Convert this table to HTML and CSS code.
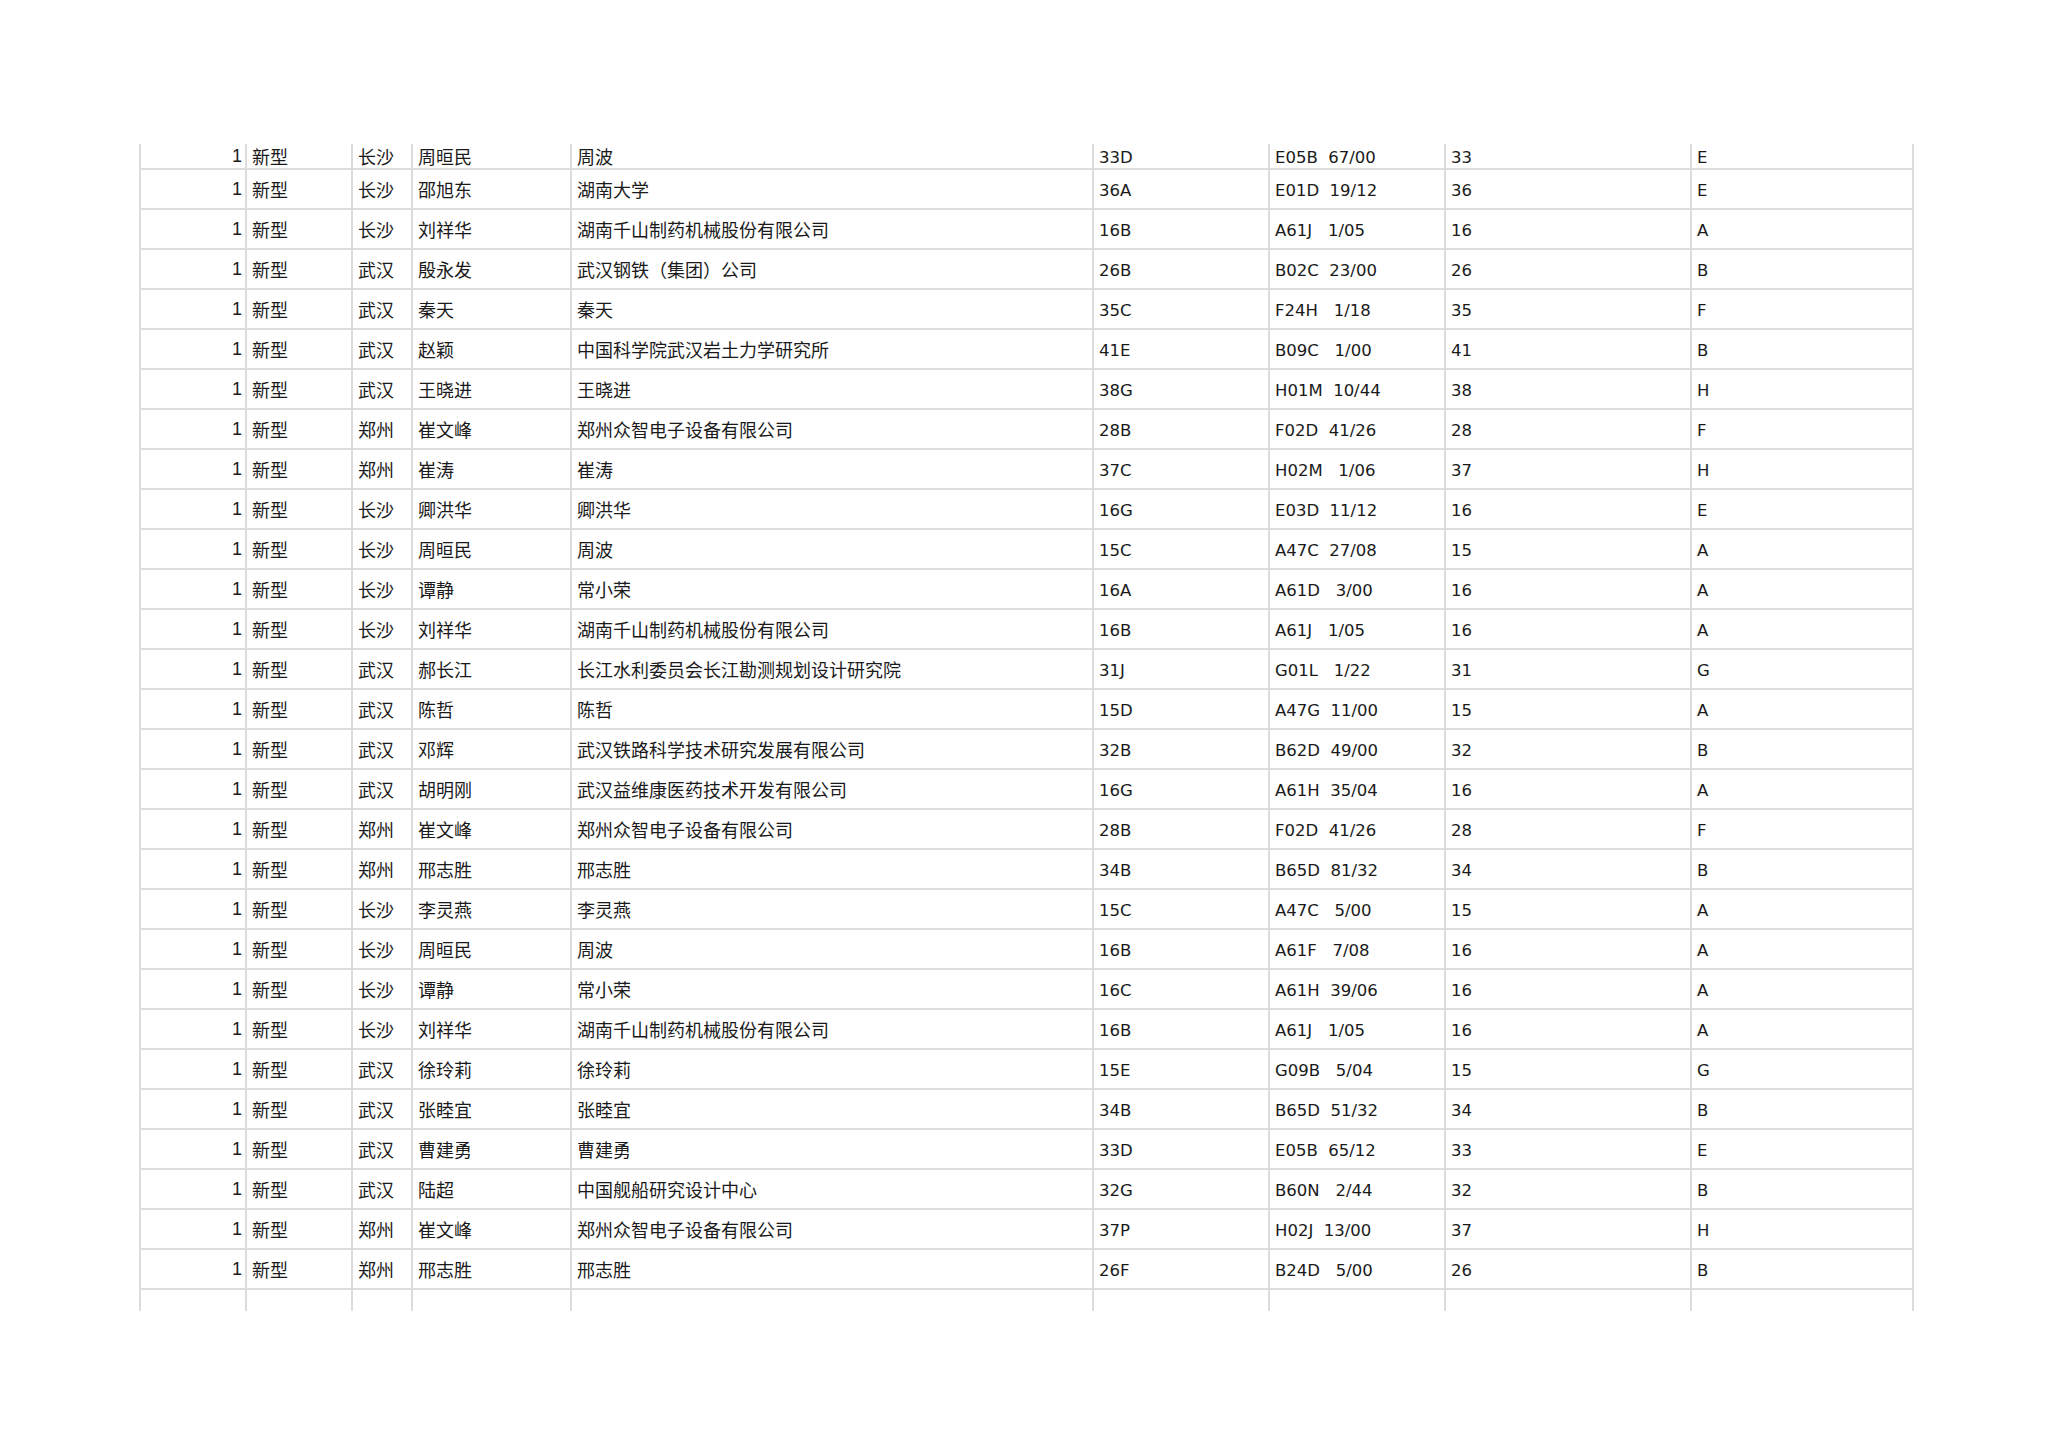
FILE: index.html
```html
<!DOCTYPE html>
<html lang="zh-CN">
<head>
<meta charset="utf-8">
<title>专利列表</title>
<link rel="stylesheet" href="styles.css">
</head>
<body>
<div class="page">
  <div class="sheet">
    <div class="row first"><div class="c num">1</div><div class="c cn">新型</div><div class="c cn">长沙</div><div class="c cn">周晅民</div><div class="c cn">周波</div><div class="c lt">33D</div><div class="c lt ipc">E05B  67/00</div><div class="c lt">33</div><div class="c lt">E</div></div>
    <div class="row"><div class="c num">1</div><div class="c cn">新型</div><div class="c cn">长沙</div><div class="c cn">邵旭东</div><div class="c cn">湖南大学</div><div class="c lt">36A</div><div class="c lt ipc">E01D  19/12</div><div class="c lt">36</div><div class="c lt">E</div></div>
    <div class="row"><div class="c num">1</div><div class="c cn">新型</div><div class="c cn">长沙</div><div class="c cn">刘祥华</div><div class="c cn">湖南千山制药机械股份有限公司</div><div class="c lt">16B</div><div class="c lt ipc">A61J   1/05</div><div class="c lt">16</div><div class="c lt">A</div></div>
    <div class="row"><div class="c num">1</div><div class="c cn">新型</div><div class="c cn">武汉</div><div class="c cn">殷永发</div><div class="c cn">武汉钢铁（集团）公司</div><div class="c lt">26B</div><div class="c lt ipc">B02C  23/00</div><div class="c lt">26</div><div class="c lt">B</div></div>
    <div class="row"><div class="c num">1</div><div class="c cn">新型</div><div class="c cn">武汉</div><div class="c cn">秦天</div><div class="c cn">秦天</div><div class="c lt">35C</div><div class="c lt ipc">F24H   1/18</div><div class="c lt">35</div><div class="c lt">F</div></div>
    <div class="row"><div class="c num">1</div><div class="c cn">新型</div><div class="c cn">武汉</div><div class="c cn">赵颖</div><div class="c cn">中国科学院武汉岩土力学研究所</div><div class="c lt">41E</div><div class="c lt ipc">B09C   1/00</div><div class="c lt">41</div><div class="c lt">B</div></div>
    <div class="row"><div class="c num">1</div><div class="c cn">新型</div><div class="c cn">武汉</div><div class="c cn">王晓进</div><div class="c cn">王晓进</div><div class="c lt">38G</div><div class="c lt ipc">H01M  10/44</div><div class="c lt">38</div><div class="c lt">H</div></div>
    <div class="row"><div class="c num">1</div><div class="c cn">新型</div><div class="c cn">郑州</div><div class="c cn">崔文峰</div><div class="c cn">郑州众智电子设备有限公司</div><div class="c lt">28B</div><div class="c lt ipc">F02D  41/26</div><div class="c lt">28</div><div class="c lt">F</div></div>
    <div class="row"><div class="c num">1</div><div class="c cn">新型</div><div class="c cn">郑州</div><div class="c cn">崔涛</div><div class="c cn">崔涛</div><div class="c lt">37C</div><div class="c lt ipc">H02M   1/06</div><div class="c lt">37</div><div class="c lt">H</div></div>
    <div class="row"><div class="c num">1</div><div class="c cn">新型</div><div class="c cn">长沙</div><div class="c cn">卿洪华</div><div class="c cn">卿洪华</div><div class="c lt">16G</div><div class="c lt ipc">E03D  11/12</div><div class="c lt">16</div><div class="c lt">E</div></div>
    <div class="row"><div class="c num">1</div><div class="c cn">新型</div><div class="c cn">长沙</div><div class="c cn">周晅民</div><div class="c cn">周波</div><div class="c lt">15C</div><div class="c lt ipc">A47C  27/08</div><div class="c lt">15</div><div class="c lt">A</div></div>
    <div class="row"><div class="c num">1</div><div class="c cn">新型</div><div class="c cn">长沙</div><div class="c cn">谭静</div><div class="c cn">常小荣</div><div class="c lt">16A</div><div class="c lt ipc">A61D   3/00</div><div class="c lt">16</div><div class="c lt">A</div></div>
    <div class="row"><div class="c num">1</div><div class="c cn">新型</div><div class="c cn">长沙</div><div class="c cn">刘祥华</div><div class="c cn">湖南千山制药机械股份有限公司</div><div class="c lt">16B</div><div class="c lt ipc">A61J   1/05</div><div class="c lt">16</div><div class="c lt">A</div></div>
    <div class="row"><div class="c num">1</div><div class="c cn">新型</div><div class="c cn">武汉</div><div class="c cn">郝长江</div><div class="c cn">长江水利委员会长江勘测规划设计研究院</div><div class="c lt">31J</div><div class="c lt ipc">G01L   1/22</div><div class="c lt">31</div><div class="c lt">G</div></div>
    <div class="row"><div class="c num">1</div><div class="c cn">新型</div><div class="c cn">武汉</div><div class="c cn">陈哲</div><div class="c cn">陈哲</div><div class="c lt">15D</div><div class="c lt ipc">A47G  11/00</div><div class="c lt">15</div><div class="c lt">A</div></div>
    <div class="row"><div class="c num">1</div><div class="c cn">新型</div><div class="c cn">武汉</div><div class="c cn">邓辉</div><div class="c cn">武汉铁路科学技术研究发展有限公司</div><div class="c lt">32B</div><div class="c lt ipc">B62D  49/00</div><div class="c lt">32</div><div class="c lt">B</div></div>
    <div class="row"><div class="c num">1</div><div class="c cn">新型</div><div class="c cn">武汉</div><div class="c cn">胡明刚</div><div class="c cn">武汉益维康医药技术开发有限公司</div><div class="c lt">16G</div><div class="c lt ipc">A61H  35/04</div><div class="c lt">16</div><div class="c lt">A</div></div>
    <div class="row"><div class="c num">1</div><div class="c cn">新型</div><div class="c cn">郑州</div><div class="c cn">崔文峰</div><div class="c cn">郑州众智电子设备有限公司</div><div class="c lt">28B</div><div class="c lt ipc">F02D  41/26</div><div class="c lt">28</div><div class="c lt">F</div></div>
    <div class="row"><div class="c num">1</div><div class="c cn">新型</div><div class="c cn">郑州</div><div class="c cn">邢志胜</div><div class="c cn">邢志胜</div><div class="c lt">34B</div><div class="c lt ipc">B65D  81/32</div><div class="c lt">34</div><div class="c lt">B</div></div>
    <div class="row"><div class="c num">1</div><div class="c cn">新型</div><div class="c cn">长沙</div><div class="c cn">李灵燕</div><div class="c cn">李灵燕</div><div class="c lt">15C</div><div class="c lt ipc">A47C   5/00</div><div class="c lt">15</div><div class="c lt">A</div></div>
    <div class="row"><div class="c num">1</div><div class="c cn">新型</div><div class="c cn">长沙</div><div class="c cn">周晅民</div><div class="c cn">周波</div><div class="c lt">16B</div><div class="c lt ipc">A61F   7/08</div><div class="c lt">16</div><div class="c lt">A</div></div>
    <div class="row"><div class="c num">1</div><div class="c cn">新型</div><div class="c cn">长沙</div><div class="c cn">谭静</div><div class="c cn">常小荣</div><div class="c lt">16C</div><div class="c lt ipc">A61H  39/06</div><div class="c lt">16</div><div class="c lt">A</div></div>
    <div class="row"><div class="c num">1</div><div class="c cn">新型</div><div class="c cn">长沙</div><div class="c cn">刘祥华</div><div class="c cn">湖南千山制药机械股份有限公司</div><div class="c lt">16B</div><div class="c lt ipc">A61J   1/05</div><div class="c lt">16</div><div class="c lt">A</div></div>
    <div class="row"><div class="c num">1</div><div class="c cn">新型</div><div class="c cn">武汉</div><div class="c cn">徐玲莉</div><div class="c cn">徐玲莉</div><div class="c lt">15E</div><div class="c lt ipc">G09B   5/04</div><div class="c lt">15</div><div class="c lt">G</div></div>
    <div class="row"><div class="c num">1</div><div class="c cn">新型</div><div class="c cn">武汉</div><div class="c cn">张睦宜</div><div class="c cn">张睦宜</div><div class="c lt">34B</div><div class="c lt ipc">B65D  51/32</div><div class="c lt">34</div><div class="c lt">B</div></div>
    <div class="row"><div class="c num">1</div><div class="c cn">新型</div><div class="c cn">武汉</div><div class="c cn">曹建勇</div><div class="c cn">曹建勇</div><div class="c lt">33D</div><div class="c lt ipc">E05B  65/12</div><div class="c lt">33</div><div class="c lt">E</div></div>
    <div class="row"><div class="c num">1</div><div class="c cn">新型</div><div class="c cn">武汉</div><div class="c cn">陆超</div><div class="c cn">中国舰船研究设计中心</div><div class="c lt">32G</div><div class="c lt ipc">B60N   2/44</div><div class="c lt">32</div><div class="c lt">B</div></div>
    <div class="row"><div class="c num">1</div><div class="c cn">新型</div><div class="c cn">郑州</div><div class="c cn">崔文峰</div><div class="c cn">郑州众智电子设备有限公司</div><div class="c lt">37P</div><div class="c lt ipc">H02J  13/00</div><div class="c lt">37</div><div class="c lt">H</div></div>
    <div class="row"><div class="c num">1</div><div class="c cn">新型</div><div class="c cn">郑州</div><div class="c cn">邢志胜</div><div class="c cn">邢志胜</div><div class="c lt">26F</div><div class="c lt ipc">B24D   5/00</div><div class="c lt">26</div><div class="c lt">B</div></div>
    <div class="row tail"><div class="c"></div><div class="c"></div><div class="c"></div><div class="c"></div><div class="c"></div><div class="c"></div><div class="c"></div><div class="c"></div><div class="c"></div></div>
  </div>
</div>
</body>
</html>
```

FILE: styles.css
```css
html, body {
  margin: 0;
  padding: 0;
  background: #ffffff;
}

.page {
  padding: 144px 0 0 139px;
  width: 2048px;
  box-sizing: border-box;
}

.sheet {
  display: flex;
  flex-direction: column;
  width: 1775px;
}

.row {
  display: grid;
  grid-template-columns: 108px 106px 60px 159px 522px 176px 176px 246px 222px;
  height: 40px;
}

.row.first {
  height: 26px;
}

.row.tail {
  height: 21px;
}

.c {
  box-sizing: border-box;
  border-right: 2px solid #dcdcdc;
  border-bottom: 2px solid #dcdcdc;
  padding: 0 4px 0 5px;
  display: flex;
  align-items: center;
  color: #1a1a1a;
  white-space: nowrap;
  overflow: hidden;
}

.row .c:first-child {
  border-left: 2px solid #dcdcdc;
}

.row.tail .c {
  border-bottom: none;
}

.num {
  justify-content: flex-end;
  padding-right: 3px;
  font-family: "Liberation Sans", "Noto Sans CJK SC", sans-serif;
  font-size: 18px;
}

.cn {
  font-family: "Noto Sans CJK SC", sans-serif;
  font-size: 18px;
  font-weight: 400;
  padding-bottom: 1px;
}

.lt {
  font-family: "DejaVu Sans", sans-serif;
  font-size: 16.5px;
  padding-top: 3px;
}

.ipc {
  white-space: pre;
}
```
